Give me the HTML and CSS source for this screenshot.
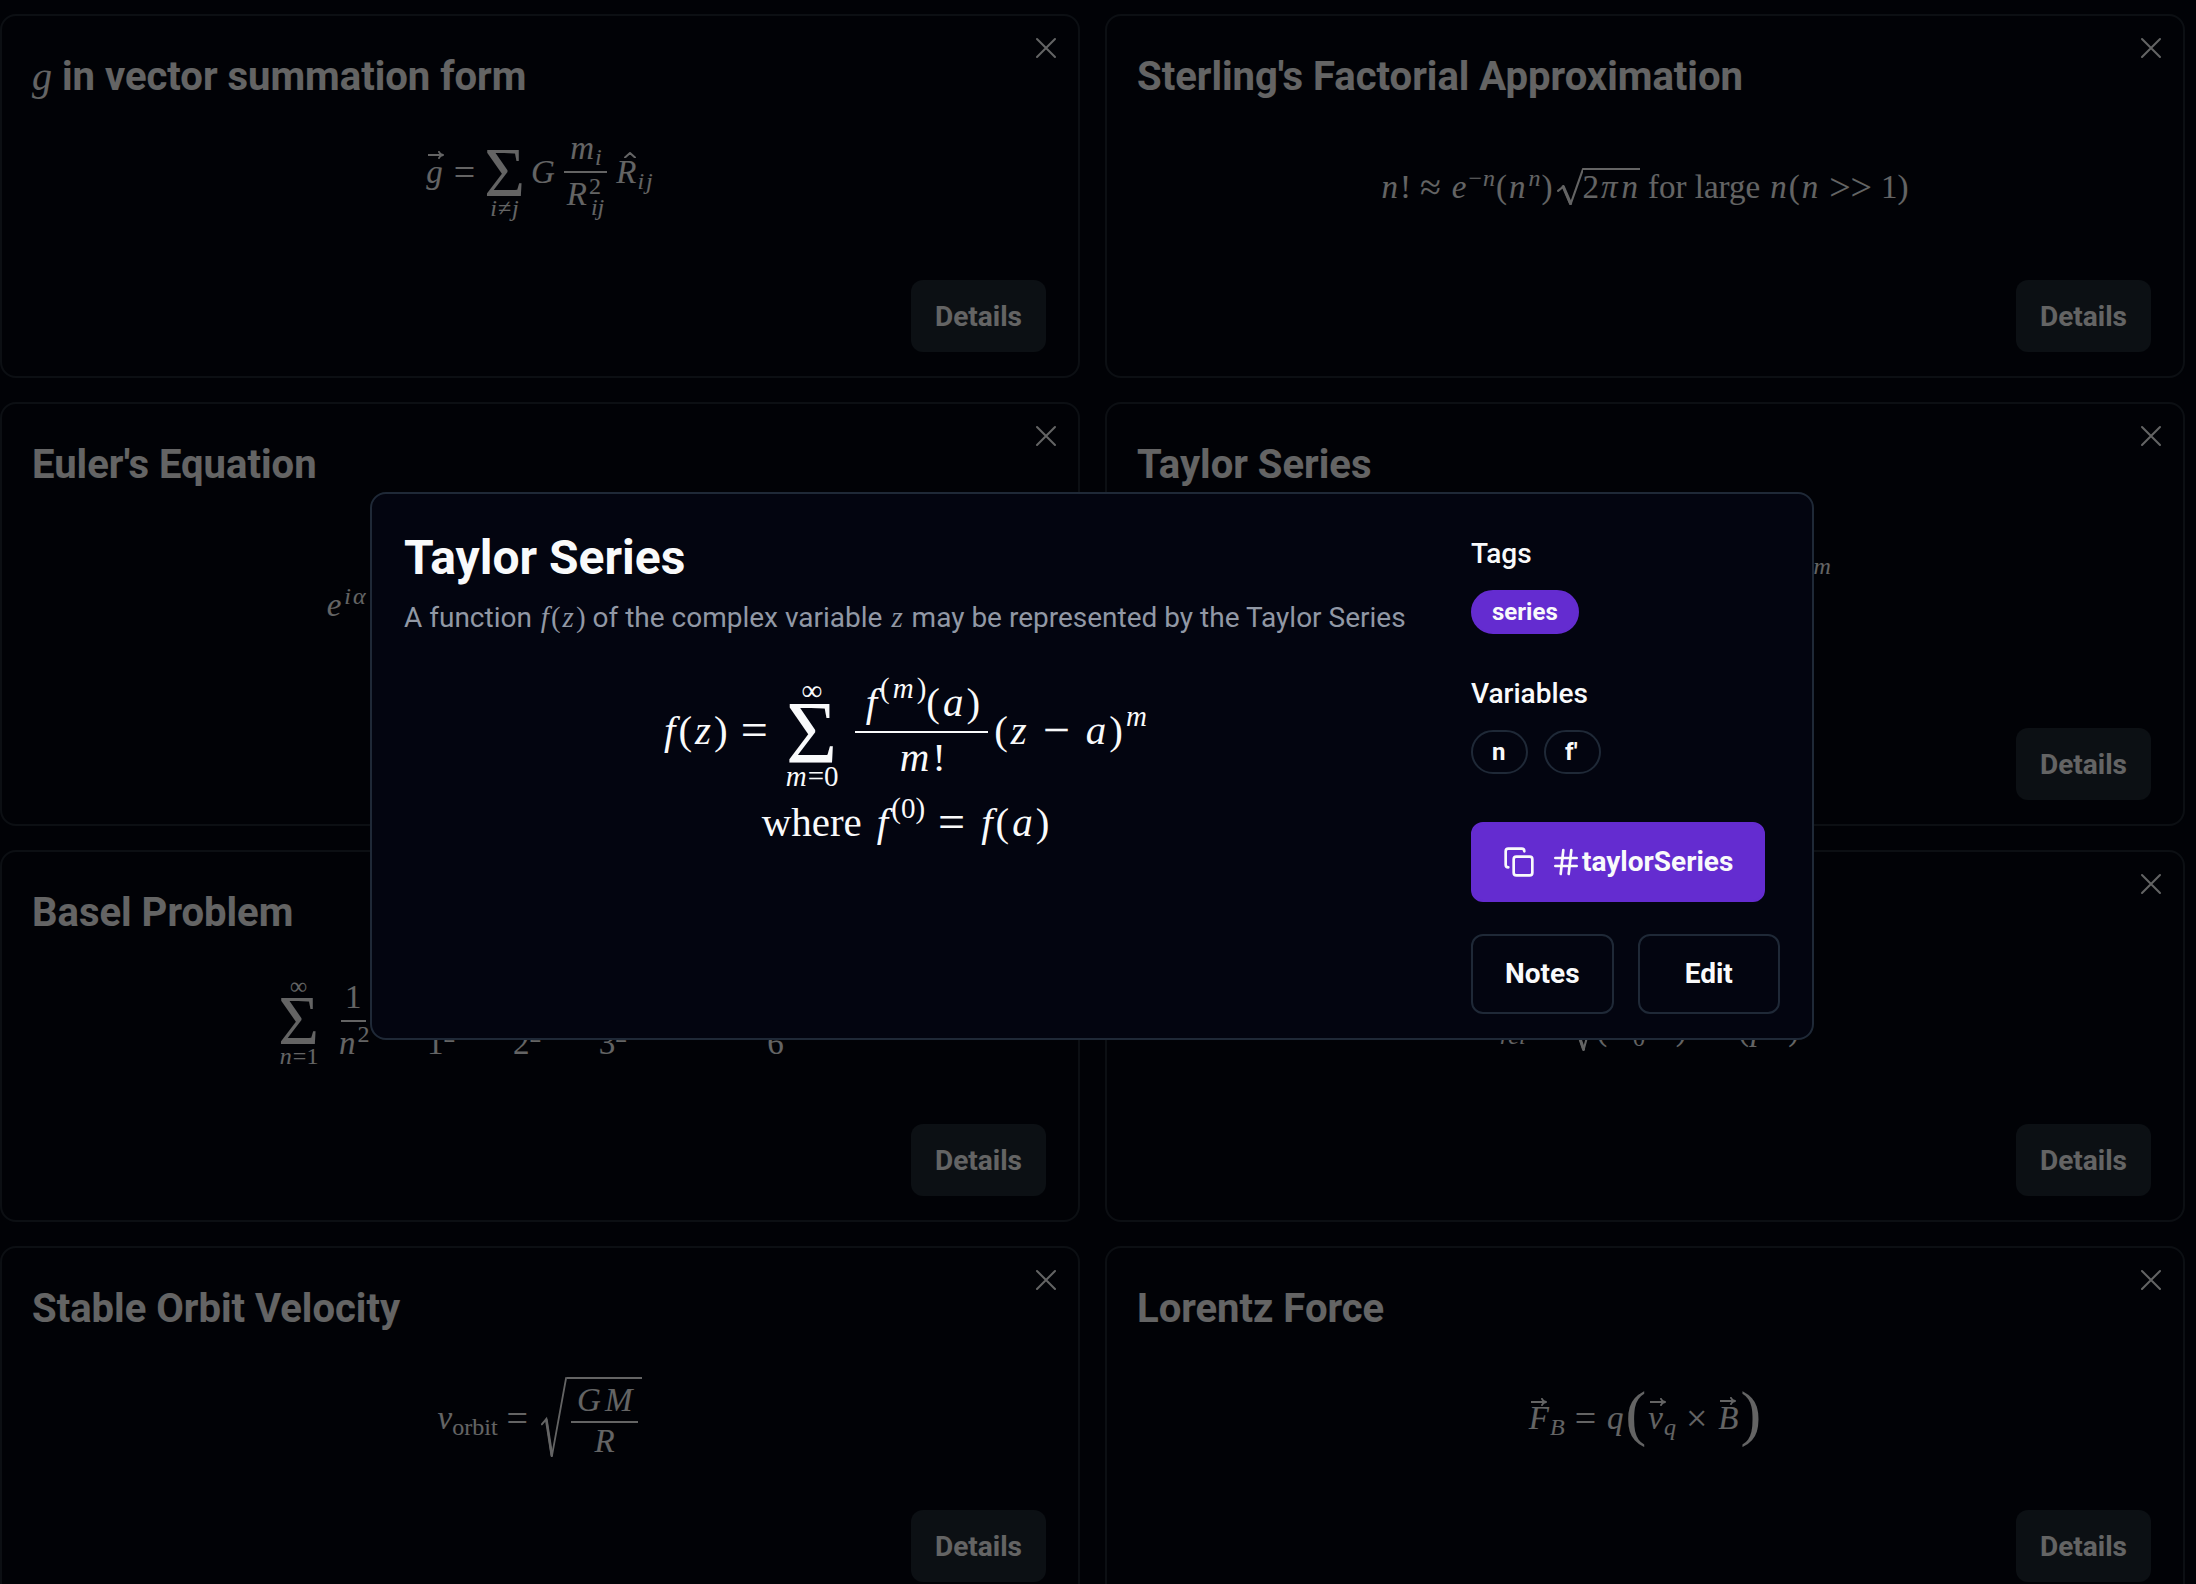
FILE: index.html
```html
<!DOCTYPE html>
<html lang="en">
<head>
<meta charset="utf-8">
<meta name="viewport" content="width=device-width, initial-scale=1">
<title>Equations</title>
<link rel="stylesheet" href="styles.css">
</head>
<body>
<svg class="defs" aria-hidden="true">
  <symbol id="close" viewBox="0 0 24 24"><path d="M3 3l18 18M21 3L3 21"/></symbol>
  <symbol id="arrow" viewBox="0 0 16 8"><path d="M0 4h15M11 1q1 2.500 4 3q-3 .5-4 3"/></symbol>
  <symbol id="hat" viewBox="0 0 12 6"><path d="M1 5.500L6 1l5 4.500"/></symbol>
</svg>
<main class="grid">
  <article class="card">
    <h2 class="card-title"><i class="tmath">g</i> in vector summation form</h2>
    <button class="close" aria-label="Remove"><svg><use href="#close"/></svg></button>
    <div class="formula high"><div class="math" role="math">
      <span class="vec"><i>g</i><svg><use href="#arrow"/></svg></span>
      <span class="rel">=</span>
      <span class="sum below"><span class="sigma">Σ</span><span class="lim"><i>i</i>≠<i>j</i></span></span>
      <i>G</i>
      <span class="frac"><span class="num"><i>m</i><sub><i>i</i></sub></span><span class="den"><i>R</i><span class="both"><span>2</span><i>ij</i></span></span></span>
      <span><span class="vec"><i>R</i><svg class="hat"><use href="#hat"/></svg></span><sub><i>i</i><i>j</i></sub></span>
    </div></div>
    <button class="details">Details</button>
  </article>
  <article class="card">
    <h2 class="card-title">Sterling's Factorial Approximation</h2>
    <button class="close" aria-label="Remove"><svg><use href="#close"/></svg></button>
    <div class="formula"><div class="math" role="math">
      <span><i>n</i>!</span><span class="rel">≈</span>
      <span><i>e</i><sup>−<i>n</i></sup>(<i>n</i><sup><i>n</i></sup>)</span>
      <span class="sqrt"><svg class="surd" viewBox="0 0 25 36" preserveAspectRatio="none"><path d="M1 22l5-4 7 17L25 1"/><path class="stem" d="M6 18l7 16"/></svg><span class="radicand">2<i>π</i><i>n</i></span></span>
      <span class="words">for large</span>
      <span class="words"><i>n</i>(<i>n</i></span><span class="rel">&gt;&gt;</span><span>1)</span>
    </div></div>
    <button class="details">Details</button>
  </article>
  <article class="card">
    <h2 class="card-title">Euler's Equation</h2>
    <button class="close" aria-label="Remove"><svg><use href="#close"/></svg></button>
    <div class="formula"><div class="math" role="math">
      <span><i>e</i><sup><i>i</i><i>α</i></sup></span><span class="rel">=</span><span>cos(<i>α</i>)</span><span class="rel">+</span><span><i>i</i> sin(<i>α</i>)</span><span class="words">for all <i>α</i></span>
    </div></div>
    <button class="details">Details</button>
  </article>
  <article class="card">
    <h2 class="card-title">Taylor Series</h2>
    <button class="close" aria-label="Remove"><svg><use href="#close"/></svg></button>
    <div class="formula raised">
      <div class="math wide" role="math">
        <span><i>f</i>(<i>z</i>)</span><span class="rel">=</span>
        <span class="sum"><span class="lim">∞</span><span class="sigma">Σ</span><span class="lim"><i>m</i>=0</span></span>
        <span class="frac"><span class="num"><i>f</i><sup>(<i>m</i>)</sup>(<i>a</i>)</span><span class="den"><i>m</i>!</span></span>
        <span>(<i>z</i></span><span class="rel">−</span><span><i>a</i>)<sup><i>m</i></sup></span>
      </div>
      <div class="math" role="math"><span>where</span><span class="words"><i>f</i><sup>(0)</sup></span><span class="rel">=</span><span><i>f</i>(<i>a</i>)</span></div>
    </div>
    <button class="details">Details</button>
  </article>
  <article class="card">
    <h2 class="card-title">Basel Problem</h2>
    <button class="close" aria-label="Remove"><svg><use href="#close"/></svg></button>
    <div class="formula raised"><div class="math wide" role="math">
      <span class="sum"><span class="lim">∞</span><span class="sigma">Σ</span><span class="lim"><i>n</i>=1</span></span>
      <span class="frac"><span class="num">1</span><span class="den"><i>n</i><sup>2</sup></span></span><span class="rel">=</span>
      <span class="frac"><span class="num">1</span><span class="den">1<sup>2</sup></span></span><span class="rel">+</span>
      <span class="frac"><span class="num">1</span><span class="den">2<sup>2</sup></span></span><span class="rel">+</span>
      <span class="frac"><span class="num">1</span><span class="den">3<sup>2</sup></span></span><span class="rel">+</span>
      <span>⋯</span><span class="rel">=</span>
      <span class="frac"><span class="num"><i>π</i><sup>2</sup></span><span class="den">6</span></span>
    </div></div>
    <button class="details">Details</button>
  </article>
  <article class="card">
    <h2 class="card-title">Relativistic Energy</h2>
    <button class="close" aria-label="Remove"><svg><use href="#close"/></svg></button>
    <div class="formula"><div class="math" role="math">
      <span><i>E</i><sub><i>rel</i></sub></span><span class="rel">=</span>
      <span class="sqrt"><svg class="surd" viewBox="0 0 25 46" preserveAspectRatio="none"><path d="M1 28l5-4 7 21L25 1"/><path class="stem" d="M6 24l7 20"/></svg><span class="radicand tall">(<i>m</i><sub>0</sub><i>c</i><sup>2</sup>)<sup>2</sup><span class="rel">+</span>(<i>p</i><i>c</i>)<sup>2</sup></span></span>
    </div></div>
    <button class="details">Details</button>
  </article>
  <article class="card">
    <h2 class="card-title">Stable Orbit Velocity</h2>
    <button class="close" aria-label="Remove"><svg><use href="#close"/></svg></button>
    <div class="formula"><div class="math" role="math">
      <span><i>v</i><sub>orbit</sub></span><span class="rel">=</span>
      <span class="sqrt"><svg class="surd" viewBox="0 0 29 78" preserveAspectRatio="none"><path d="M1 45l5-5 6 36L28 1"/><path class="stem" d="M6 41l6 33"/></svg><span class="radicand"><span class="frac"><span class="num"><i>G</i><i>M</i></span><span class="den"><i>R</i></span></span></span></span>
    </div></div>
    <button class="details">Details</button>
  </article>
  <article class="card">
    <h2 class="card-title">Lorentz Force</h2>
    <button class="close" aria-label="Remove"><svg><use href="#close"/></svg></button>
    <div class="formula"><div class="math" role="math">
      <span><span class="vec"><i>F</i><svg><use href="#arrow"/></svg></span><sub><i>B</i></sub></span><span class="rel">=</span><i>q</i>
      <span class="paren">(</span><span><span class="vec"><i>v</i><svg><use href="#arrow"/></svg></span><sub><i>q</i></sub></span><span class="rel">×</span><span class="vec"><i>B</i><svg><use href="#arrow"/></svg></span><span class="paren">)</span>
    </div></div>
    <button class="details">Details</button>
  </article>
</main>
<div class="overlay">
  <section class="modal" role="dialog" aria-modal="true" aria-labelledby="modal-title">
    <div class="main">
      <h1 class="modal-title" id="modal-title">Taylor Series</h1>
      <p class="description">A function <span class="inline"><i>f</i>(<i>z</i>)</span> of the complex variable <span class="inline"><i>z</i></span> may be represented by the Taylor Series</p>
      <div class="formula large">
        <div class="math" role="math">
          <span><i>f</i>(<i>z</i>)</span><span class="rel">=</span>
          <span class="sum"><span class="lim">∞</span><span class="sigma">Σ</span><span class="lim"><i>m</i>=0</span></span>
          <span class="frac"><span class="num"><i>f</i><sup>(<i>m</i>)</sup>(<i>a</i>)</span><span class="den"><i>m</i>!</span></span>
          <span>(<i>z</i></span><span class="rel">−</span><span><i>a</i>)<sup><i>m</i></sup></span>
        </div>
        <div class="math" role="math"><span>where</span><span class="words"><i>f</i><sup>(0)</sup></span><span class="rel">=</span><span><i>f</i>(<i>a</i>)</span></div>
      </div>
    </div>
    <aside class="side">
      <h2 class="label">Tags</h2>
      <div class="badges"><span class="badge filled">series</span></div>
      <h2 class="label next">Variables</h2>
      <div class="badges"><span class="badge">n</span><span class="badge">f'</span></div>
      <button class="btn copy">
        <svg viewBox="0 0 24 24"><rect x="8" y="8" width="14" height="14" rx="2"/><path d="M4 16c-1.100 0-2-.9-2-2V4c0-1.100.9-2 2-2h10c1.100 0 2 .9 2 2"/></svg>
        <span class="hashed"><svg viewBox="0 0 24 24"><path d="M4 9h16M4 15h16M10 3L8 21M16 3l-2 18"/></svg>taylorSeries</span>
      </button>
      <div class="actions"><button class="btn">Notes</button><button class="btn">Edit</button></div>
    </aside>
  </section>
</div>
</body>
</html>
```
FILE: styles.css
```css
* { box-sizing: border-box; }
html { overflow: hidden; }
body {
  margin: 0;
  background: #030711;
  color: #f9fafb;
  font-family: Roboto, "Liberation Sans", sans-serif;
  font-size: 28px;
  line-height: 40px;
}
h1, h2, p { margin: 0; }
button { font: inherit; color: inherit; border: 0; background: none; cursor: pointer; }
svg { fill: none; stroke: currentColor; stroke-width: 2; stroke-linecap: round; stroke-linejoin: round; }
.defs { display: none; }

.grid {
  display: grid;
  grid-template-columns: 1fr 1fr;
  grid-template-rows: minmax(364px, auto) minmax(424px, auto) minmax(372px, auto) minmax(362px, auto);
  gap: 24px 25px;
  padding: 14px 11px 14px 0;
}
.card {
  position: relative;
  display: flex;
  flex-direction: column;
  padding: 35px 32px 24px 30px;
  border: 2px solid #1f2630;
  border-radius: 16px;
}
.card-title { font-size: 40px; line-height: 52px; font-weight: 700; }
.tmath { font-weight: 400; }
.close {
  position: absolute;
  top: 20px;
  right: 20px;
  padding: 0;
  width: 24px;
  height: 24px;
}
.close svg { display: block; width: 24px; height: 24px; }
.formula {
  flex: 1;
  display: flex;
  flex-direction: column;
  align-items: center;
  justify-content: center;
  gap: 6px;
  padding-bottom: 10px;
}
.formula.raised { padding-bottom: 26px; }
.formula.high { padding-bottom: 40px; }
.details {
  align-self: flex-end;
  padding: 17px 24px 15px;
  border-radius: 12px;
  background: #1f2832;
  font-weight: 700;
}

/* Formula typesetting */
.math, .inline, .tmath { font-family: "Liberation Serif", serif; }
.math {
  display: flex;
  align-items: center;
  font-size: 33px;
  line-height: 38px;
  white-space: nowrap;
}
.math i { margin: 0 2px; }
.rel { margin: 0 9px; font-size: 38px; }
.words { margin-left: 8px; }
.math sup, .math sub { font-size: 24px; line-height: 0; }
.math sup { vertical-align: 12px; }
.math sub { vertical-align: -6px; margin-left: -2px; }
.math sup i, .math sub i { margin: 0 1px; }
.sum {
  display: flex;
  flex-direction: column;
  align-items: center;
  padding-top: 4px;
  margin-right: 4px;
}
.sum.below { padding-top: 26px; }
.sigma { font-size: 70px; line-height: 46px; }
.lim { font-size: 24px; line-height: 24px; }
.math .lim i { margin: 0 1px; }
.frac {
  display: inline-flex;
  flex-direction: column;
  align-items: center;
  margin: 0 4px;
}
.num, .den { padding: 0 4px; }
.num { line-height: 46px; border-bottom: 2px solid; }
.den { line-height: 42px; }
.wide .sum { margin-right: 10px; }
.wide .rel { margin: 0 10px; }
.both {
  display: inline-flex;
  flex-direction: column;
  vertical-align: middle;
  font-size: 24px;
  line-height: 21px;
}
.vec { position: relative; }
.vec svg { position: absolute; top: -2px; left: 4px; width: 16px; height: 8px; }
.vec .hat { left: 10px; width: 12px; height: 6px; }
.sqrt { display: inline-flex; margin-left: 4px; }
.surd { width: 26px; align-self: stretch; height: auto; stroke-linejoin: miter; }
.stem { stroke-width: 3; }
.radicand { border-top: 2px solid; line-height: 34px; }
.radicand.tall { line-height: 44px; }
.radicand .num { line-height: 42px; }
.radicand .den { line-height: 36px; }
.paren { padding-bottom: 10px; font-size: 62px; line-height: 54px; }

.large .math { font-size: 41px; line-height: 48px; }
.large .math i { margin: 0 3px; }
.large .rel { margin: 0 13px; font-size: 48px; }
.large .sum { padding-top: 6px; margin: 0 10px 0 4px; }
.large .math sup { font-size: 29px; vertical-align: 18px; }
.large .sigma { font-size: 88px; line-height: 58px; }
.large .lim { font-size: 29px; line-height: 28px; }
.large .math .lim i { margin: 0 1px; }
.large .frac { margin: 0 6px; }
.large .num { padding: 0 8px; line-height: 58px; }
.large .den { line-height: 48px; padding-bottom: 7px; }
.large .words { margin-left: 12px; }

/* Dialog */
.overlay {
  position: fixed;
  inset: 0;
  display: grid;
  place-items: center;
  padding: 0 12px 52px 0;
  background: rgba(0, 0, 0, 0.6);
}
.modal {
  display: grid;
  grid-template-columns: 1fr auto;
  gap: 64px;
  width: 100%;
  max-width: 1444px;
  padding: 32px 32px 24px;
  background: #030510;
  border: 2px solid #1f2937;
  border-radius: 16px;
}
.main { display: flex; flex-direction: column; }
.modal-title { font-size: 48px; line-height: 64px; font-weight: 700; }
.description { margin-top: 8px; color: #9198a5; white-space: nowrap; }
.inline { font-size: 29px; line-height: 0; }
.inline i { margin: 0 2px; }
.formula.large { flex: none; margin-top: 32px; padding: 0; gap: 8px; }
.side { width: 309px; padding-top: 8px; }
.label { font-size: 28px; font-weight: 500; }
.next { margin-top: 40px; }
.badges { display: flex; gap: 16px; margin-top: 16px; }
.badge {
  padding: 4px 19px;
  min-width: 57px;
  border: 2px solid #1f2937;
  border-radius: 22px;
  font-size: 24px;
  line-height: 32px;
  font-weight: 700;
}
.filled { background: #642cd0; border-color: #642cd0; }
.btn {
  display: flex;
  align-items: center;
  justify-content: center;
  height: 80px;
  border: 2px solid #1f2937;
  border-radius: 12px;
  font-weight: 700;
}
.copy { gap: 15px; margin-top: 48px; padding: 0 30px; background: #642cd0; border-color: #642cd0; }
.copy svg { width: 32px; height: 32px; }
.hashed { display: flex; align-items: center; }
.actions { display: grid; grid-template-columns: 1fr 1fr; gap: 24px; margin-top: 32px; }
```
